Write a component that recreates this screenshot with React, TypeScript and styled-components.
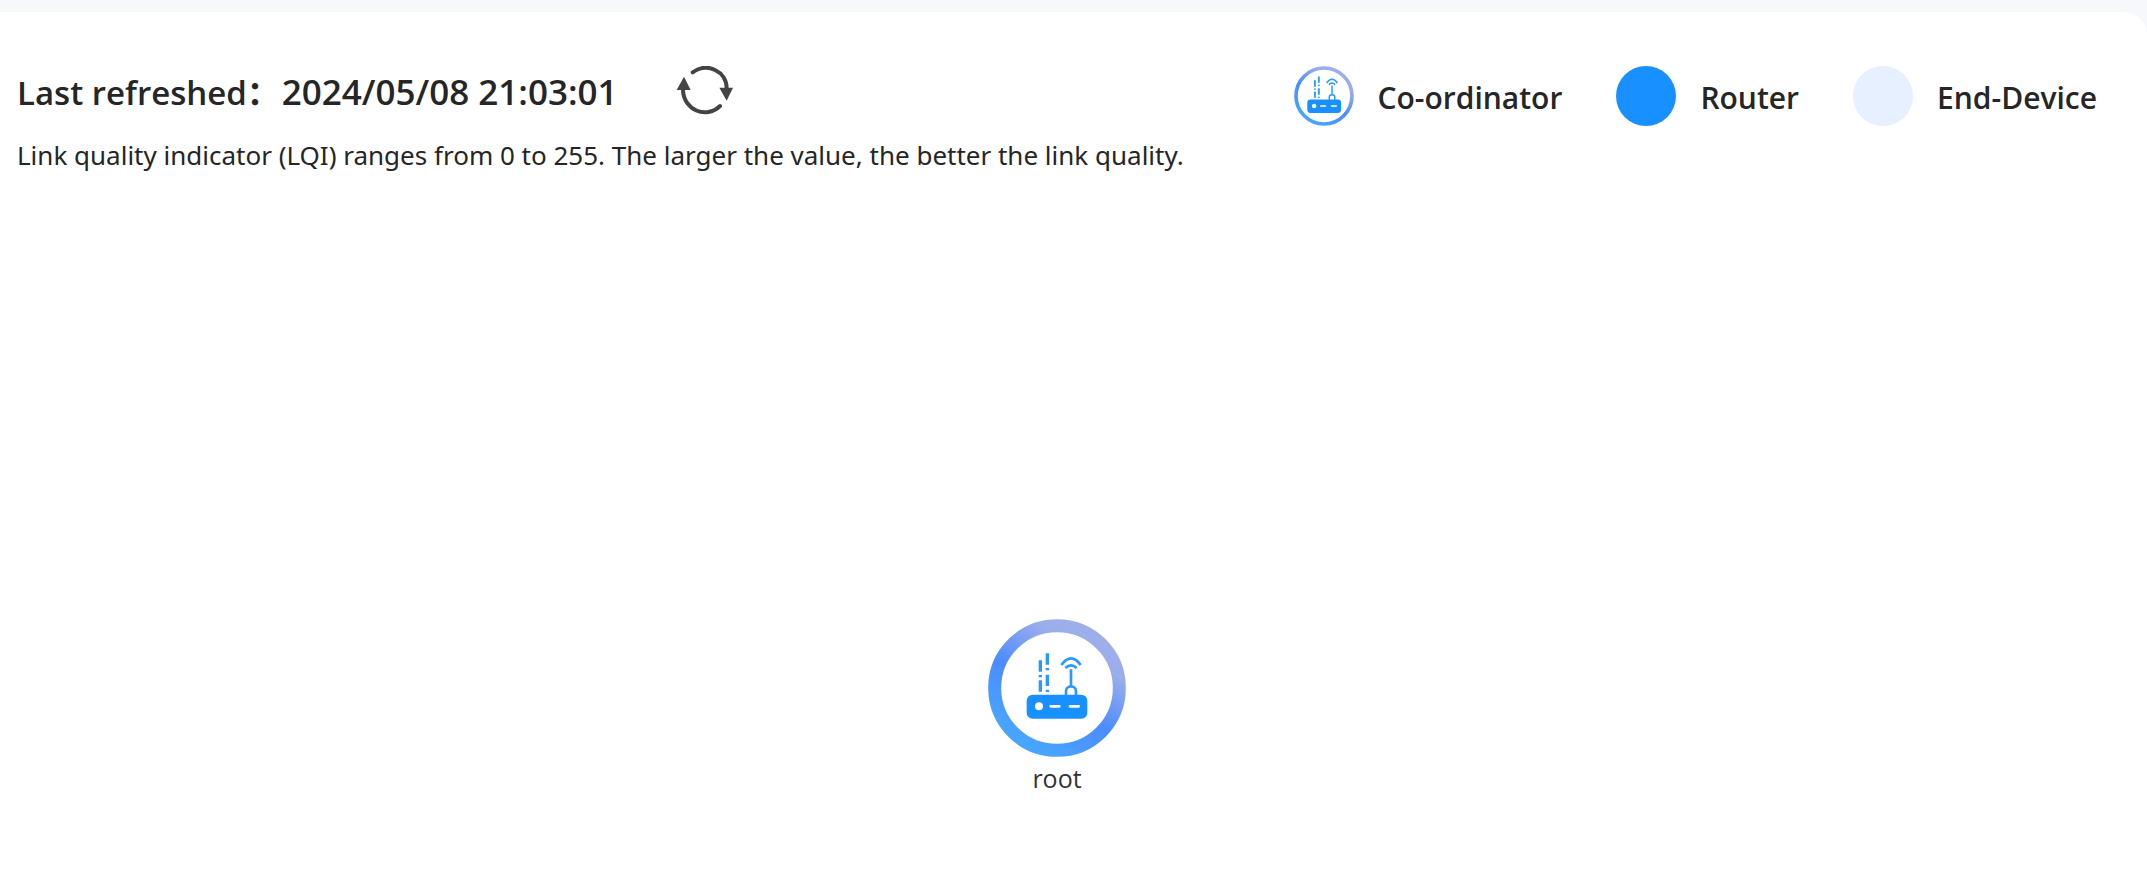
import React from "react";
import styled, { createGlobalStyle } from "styled-components";

const GlobalStyle = createGlobalStyle`
  * { box-sizing: border-box; }
  body {
    margin: 0;
    background: #f6f8fc;
    color: #262626;
    font-family: "Open Sans", "Noto Sans CJK SC", sans-serif;
  }
`;

const Page = styled.div`
  display: flex;
  flex-direction: column;
  min-height: 100vh;
  padding-top: 12px;
`;

const Panel = styled.main`
  flex: 1;
  padding: 54px 50px 0 17px;
  background: #fff;
  border-top-right-radius: 24px;
`;

const Header = styled.header`
  display: flex;
  justify-content: space-between;
  align-items: flex-start;
`;

const TitleRow = styled.div`
  display: flex;
  align-items: flex-start;
  gap: 58px;
`;

const Title = styled.h1`
  display: flex;
  align-items: baseline;
  gap: 2px;
  margin: 0;
  font-size: 33px;
  font-weight: 600;
  line-height: 52px;
  white-space: nowrap;
`;

const Timestamp = styled.time`
  font-size: 35px;
`;

const RefreshButton = styled.button`
  display: flex;
  padding: 0;
  border: 0;
  background: none;
  cursor: pointer;
`;

const Hint = styled.p`
  margin: 14px 0 0;
  font-family: "Noto Sans", sans-serif;
  font-size: 26px;
  line-height: 44px;
  white-space: nowrap;
`;

const Legend = styled.ul`
  display: flex;
  gap: 54px;
  margin: 0;
  padding: 0;
  list-style: none;
`;

const LegendItem = styled.li`
  display: flex;
  align-items: flex-start;
  gap: 24px;
  font-size: 30px;
  font-weight: 600;
  line-height: 64px;
  white-space: nowrap;
`;

const Dot = styled.span<{ $color: string }>`
  width: 60px;
  height: 60px;
  border-radius: 50%;
  background: ${(p) => p.$color};
`;

const Canvas = styled.section`
  display: flex;
  justify-content: center;
  padding: 442px 0 80px;
`;

const Node = styled.figure`
  display: flex;
  flex-direction: column;
  align-items: center;
  margin: 0;
`;

const NodeLabel = styled.figcaption`
  font-size: 25px;
  line-height: 42px;
  color: #333;
`;

const RouterGlyph = () => (
  <g>
    <rect x="170" y="268" width="182" height="72" rx="18" fill="#1890ff" />
    <circle cx="207" cy="303" r="12" fill="#fff" />
    <path d="M242 303H268M300 303H326" stroke="#fff" strokeWidth="8" strokeLinecap="round" />
    <path
      d="M211 165V199M211 209V216M211 225V259M232 144V178M232 188V195M232 208V242M232 253V260"
      stroke="#2a98ff"
      strokeWidth="10"
      fill="none"
    />
    <path
      d="M303 192V244M288 270V257a15 14 0 0 1 30 0V270M286 188Q303 172 320 188M274 179Q303 139 332 179"
      stroke="#2a98ff"
      strokeWidth="8"
      strokeLinejoin="round"
      fill="none"
    />
  </g>
);

const RingGradient = ({ id }: { id: string }) => (
  <linearGradient id={id} x1="0.8" y1="0.1" x2="0.25" y2="0.95">
    <stop offset="0" stopColor="#9dafeb" />
    <stop offset="0.15" stopColor="#9aadeb" />
    <stop offset="0.56" stopColor="#4b8cff" />
    <stop offset="1" stopColor="#48a6ff" />
  </linearGradient>
);

const CoordinatorNode = () => (
  <svg width="138" height="138" viewBox="54 41 414 414" aria-hidden="true">
    <defs>
      <RingGradient id="node-ring" />
    </defs>
    <circle cx="261" cy="248" r="187" fill="#fff" stroke="url(#node-ring)" strokeWidth="39" />
    <RouterGlyph />
  </svg>
);

const CoordinatorBadge = () => (
  <svg width="60" height="60" viewBox="42 47 180 180" aria-hidden="true">
    <defs>
      <RingGradient id="badge-ring" />
    </defs>
    <circle cx="132" cy="137" r="84" fill="#fff" stroke="url(#badge-ring)" strokeWidth="11" />
    <g transform="translate(-13 -2) scale(0.558)">
      <RouterGlyph />
    </g>
  </svg>
);

const RefreshIcon = () => (
  <svg width="58" height="50" viewBox="48 47 174 150" aria-hidden="true">
    <path
      d="M98 66C141 35 200 62 200 114M180 167C138 208 70 178 69 118"
      fill="none"
      stroke="#444"
      strokeWidth="12"
      strokeLinecap="round"
    />
    <path d="M178 112H219L200 151ZM50 119H92L72 79Z" fill="#444" />
  </svg>
);

export default function App() {
  return (
    <>
      <GlobalStyle />
      <Page>
        <Panel>
          <Header>
            <div>
              <TitleRow>
                <Title>
                  <span>Last refreshed：</span>
                  <Timestamp dateTime="2024-05-08T21:03:01">2024/05/08 21:03:01</Timestamp>
                </Title>
                <RefreshButton type="button" aria-label="Refresh">
                  <RefreshIcon />
                </RefreshButton>
              </TitleRow>
              <Hint>
                Link quality indicator (LQI) ranges from 0 to 255. The larger the value, the better the link quality.
              </Hint>
            </div>
            <Legend>
              <LegendItem>
                <CoordinatorBadge />
                Co-ordinator
              </LegendItem>
              <LegendItem>
                <Dot $color="#1890ff" />
                Router
              </LegendItem>
              <LegendItem>
                <Dot $color="#e6f0ff" />
                End-Device
              </LegendItem>
            </Legend>
          </Header>
          <Canvas>
            <Node>
              <CoordinatorNode />
              <NodeLabel>root</NodeLabel>
            </Node>
          </Canvas>
        </Panel>
      </Page>
    </>
  );
}
